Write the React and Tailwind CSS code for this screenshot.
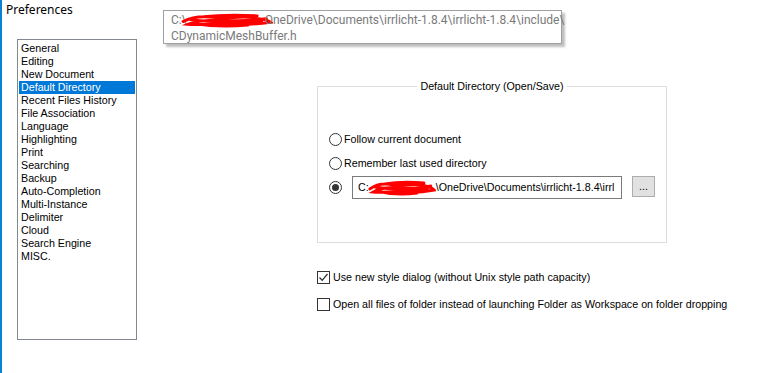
import React from "react";

const items = [
  "General","Editing","New Document","Default Directory","Recent Files History","File Association",
  "Language","Highlighting","Print","Searching","Backup","Auto-Completion","Multi-Instance",
  "Delimiter","Cloud","Search Engine","MISC.",
];

function Scribble({ w, h }) {
  return (
    <svg width={w} height={h} viewBox="0 0 80 16" preserveAspectRatio="none" className="inline-block align-middle">
      <path d="M2 9 C10 4 20 3 30 5 C40 7 50 3 62 5 C70 6 76 8 78 10 C66 12 54 13 40 12 C28 11 16 13 6 12 C14 8 28 7 44 8 C56 9 66 7 74 6 M10 11 C24 14 40 15 58 13 M20 4 C34 2 50 2 66 3 M8 7 C22 9 40 10 70 9"
        fill="none" stroke="#ff0000" strokeWidth="3" strokeLinecap="round" />
    </svg>
  );
}

function Radio({ checked }) {
  return (
    <span className="w-[13px] h-[13px] rounded-full border border-[#333] bg-white flex items-center justify-center shrink-0">
      {checked && <span className="w-[7px] h-[7px] rounded-full bg-[#333]" />}
    </span>
  );
}

function Check({ checked }) {
  return (
    <span className="w-[13px] h-[13px] border border-[#333] bg-white flex items-center justify-center shrink-0">
      {checked && (
        <svg width="11" height="11" viewBox="0 0 11 11">
          <path d="M1.5 5.5 L4.2 8.3 L9.5 2" fill="none" stroke="#333" strokeWidth="1.3" />
        </svg>
      )}
    </span>
  );
}

export default function App() {
  return (
    <div className="w-[776px] h-[373px] bg-white relative flex overflow-hidden text-black" style={{ fontFamily: '"Liberation Sans", Arial, sans-serif' }}>
      <div className="w-[2px] bg-[#0a82d4] shrink-0" />
      <div className="flex flex-col shrink-0">
        <div className="pl-[4px] pt-[2px] text-[12px] leading-[15px]" style={{ fontFamily: '"Noto Sans", sans-serif' }}>Preferences</div>
        <div className="ml-[15px] mt-[22px] w-[120px] h-[301px] border border-[#828790] pt-[2px] pl-[1px] pr-[1px] text-[10.7px]">
          {items.map((it) => (
            <div key={it} className={"h-[13px] leading-[13px] pl-[2px] whitespace-nowrap " + (it === "Default Directory" ? "bg-[#0078d7] text-white" : "")}>{it}</div>
          ))}
        </div>
      </div>

      <div className="flex flex-col ml-[180px] mt-[80px] text-[10.7px]">
        <fieldset className="w-[348px] h-[163px] border border-[#dcdcdc] px-[11px]">
          <legend className="mx-auto px-[3px] leading-[13px] text-[10.7px]">Default Directory (Open/Save)</legend>
          <div className="flex flex-col mt-[40px] gap-[11px]">
            <label className="flex items-center gap-[2px] h-[13px]"><Radio /><span>Follow current document</span></label>
            <label className="flex items-center gap-[2px] h-[13px]"><Radio /><span>Remember last used directory</span></label>
            <div className="flex items-center -mt-[5px]">
              <Radio checked />
              <div className="ml-[10px] w-[270px] h-[23px] border border-[#7a7a7a] flex items-center pl-[5px] overflow-hidden whitespace-nowrap">
                <span>C:</span>
                <span className="-ml-[1px]"><Scribble w={68} h={16} /></span>
                <span>\OneDrive\Documents\irrlicht-1.8.4\irrl</span>
              </div>
              <div className="ml-[10px] w-[23px] h-[21px] bg-[#e1e1e1] border border-[#adadad] flex items-center justify-center -mt-[2px]">...</div>
            </div>
          </div>
        </fieldset>
        <div className="flex flex-col mt-[28px] gap-[14px]">
          <label className="flex items-center gap-[3px] h-[13px] whitespace-nowrap"><Check checked /><span>Use new style dialog (without Unix style path capacity)</span></label>
          <label className="flex items-center gap-[3px] h-[13px] whitespace-nowrap"><Check /><span>Open all files of folder instead of launching Folder as Workspace on folder dropping</span></label>
        </div>
      </div>

      <div className="absolute left-[163px] top-[10px] w-[399px] h-[34px] bg-white border border-[#a0a0a0] shadow-[3px_3px_2px_rgba(0,0,0,0.25)] px-[7px] pt-[1px] text-[12px] leading-[16px] text-[#7a7a7a] whitespace-nowrap" style={{ fontFamily: 'Roboto, sans-serif' }}>
        <div className="flex items-center">
          <span>C:\</span>
          <span className="-ml-[6px]"><Scribble w={92} h={15} /></span>
          <span className="-ml-[8px]">OneDrive\Documents\irrlicht-1.8.4\irrlicht-1.8.4\include\</span>
        </div>
        <div>CDynamicMeshBuffer.h</div>
      </div>
    </div>
  );
}
